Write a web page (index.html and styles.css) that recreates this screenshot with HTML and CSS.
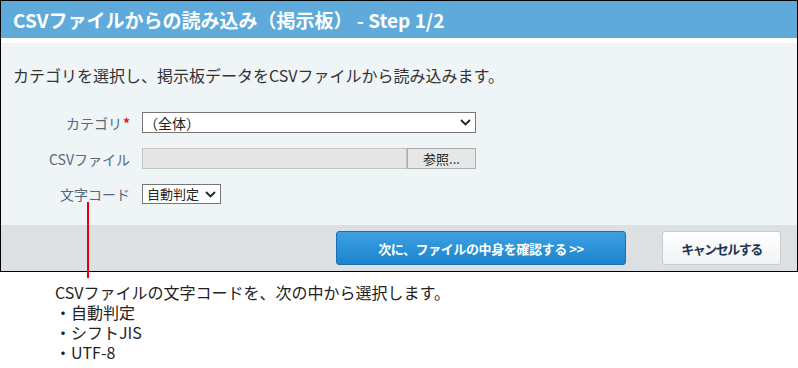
FILE: index.html
```html
<!DOCTYPE html>
<html lang="ja">
<head>
<meta charset="utf-8">
<title>CSVファイルからの読み込み（掲示板）</title>
<link rel="stylesheet" href="styles.css">
</head>
<body>
<div class="page">
  <div class="dialog">
    <div class="dlg-head">CSVファイルからの読み込み（掲示板） - Step 1/2</div>
    <div class="dlg-body">
      <p class="desc">カテゴリを選択し、掲示板データをCSVファイルから読み込みます。</p>
      <div class="form">
        <div class="lbl">カテゴリ<span class="req">*</span></div>
        <div class="ctl">
          <div class="select select-wide">
            <span class="sel-text">（全体）</span>
            <svg class="chev" width="11" height="7" viewBox="0 0 11 7"><path d="M1 1 L5.5 5.5 L10 1" fill="none" stroke="#222" stroke-width="1.8"/></svg>
          </div>
        </div>
        <div class="lbl">CSVファイル</div>
        <div class="ctl file">
          <div class="file-field"></div>
          <div class="file-btn">参照...</div>
        </div>
        <div class="lbl">文字コード</div>
        <div class="ctl">
          <div class="select select-small">
            <span class="sel-text">自動判定</span>
            <svg class="chev" width="11" height="7" viewBox="0 0 11 7"><path d="M1 1 L5.5 5.5 L10 1" fill="none" stroke="#222" stroke-width="1.8"/></svg>
          </div>
        </div>
      </div>
    </div>
    <div class="dlg-foot">
      <button class="btn btn-primary">次に、ファイルの中身を確認する &gt;&gt;</button>
      <button class="btn btn-cancel">キャンセルする</button>
    </div>
  </div>
  <div class="callout-line"></div>
  <div class="note">
    <div class="note-line">CSVファイルの文字コードを、次の中から選択します。</div>
    <div class="note-line">・自動判定</div>
    <div class="note-line">・シフトJIS</div>
    <div class="note-line">・UTF-8</div>
  </div>
</div>
</body>
</html>
```
FILE: styles.css
```css
html, body {
  margin: 0;
  padding: 0;
  background: #ffffff;
}
body {
  font-family: "Noto Sans CJK JP", "Noto Sans", sans-serif;
  color: #333;
}
.page {
  position: relative;
  width: 798px;
  height: 368px;
}
.dialog {
  border: 1px solid #000;
  width: 796px;
}
.dlg-head {
  height: 37px;
  line-height: 37px;
  background: #5eaadb;
  color: #fff;
  font-weight: bold;
  font-size: 19px;
  letter-spacing: 0;
  padding-left: 12px;
  border-bottom: 5px solid #fff;
  white-space: nowrap;
}
.dlg-body {
  background: #eff4f7;
  padding: 22px 12px 21px;
}
.desc {
  margin: 0;
  font-size: 16px;
  line-height: 20px;
  color: #333;
}
.form {
  margin-top: 27px;
  display: grid;
  grid-template-columns: 117px 1fr;
  column-gap: 12px;
  row-gap: 15px;
}
.lbl {
  text-align: right;
  font-size: 14px;
  color: #56687a;
  display: flex;
  align-items: center;
  justify-content: flex-end;
  line-height: 16px;
  white-space: nowrap;
}
.req {
  color: #e31b1b;
  font-weight: bold;
  font-size: 14px;
  margin-left: 1px;
}
.ctl {
  display: flex;
}
.select {
  box-sizing: border-box;
  background: #fff;
  border: 1px solid #767676;
  display: flex;
  align-items: center;
  justify-content: space-between;
  font-size: 14px;
  color: #222;
}
.select-wide {
  width: 334px;
  height: 21px;
  padding: 0 4px 0 1px;
}
.select-small {
  width: 79px;
  height: 20px;
  padding: 0 4px 0 4px;
  font-size: 13px;
}
.sel-text {
  line-height: 18px;
  white-space: nowrap;
}
.chev {
  display: block;
}
.file-field {
  box-sizing: border-box;
  width: 265px;
  height: 21px;
  background: #e6e6e6;
  border: 1px solid #c4c4c4;
}
.file-btn {
  box-sizing: border-box;
  width: 69px;
  height: 21px;
  background: #e7e7e7;
  border: 1px solid #adadad;
  font-size: 13px;
  line-height: 19px;
  text-align: center;
  color: #222;
}
.dlg-foot {
  background: #dce0e3;
  height: 46px;
  box-sizing: border-box;
  padding: 6px 16px 6px;
  display: flex;
  justify-content: flex-end;
  gap: 36px;
}
.btn {
  box-sizing: border-box;
  height: 34px;
  border-radius: 3px;
  font-family: "Noto Sans CJK JP", sans-serif;
  font-weight: bold;
  font-size: 13px;
  padding: 0;
  cursor: pointer;
}
.btn-primary {
  width: 290px;
  color: #fff;
  background: linear-gradient(#3ea0e1, #1a85ce);
  border: 1px solid #1c6fae;
  letter-spacing: -0.4px;
}
.btn-cancel {
  width: 119px;
  color: #1c3553;
  background: linear-gradient(#ffffff, #f1f2f3);
  border: 1px solid #c6ccd1;
  letter-spacing: -1.5px;
}
.callout-line {
  position: absolute;
  left: 87px;
  top: 202px;
  width: 2px;
  height: 76px;
  background: #e60012;
}
.note {
  margin-top: 10px;
  padding-left: 55px;
  font-size: 16px;
  color: #222;
}
.note-line {
  height: 20px;
  line-height: 20px;
  white-space: nowrap;
}
```
